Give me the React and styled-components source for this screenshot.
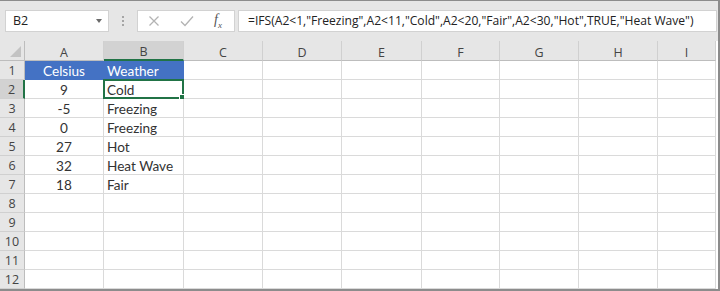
import React from "react";
import styled, { createGlobalStyle } from "styled-components";

const COLS = ["A", "B", "C", "D", "E", "F", "G", "H", "I"];
const WIDTHS = [79, 80, 79, 79, 80, 78, 79, 79, 58];

const rows = [
  { a: "Celsius", b: "Weather", head: true },
  { a: "9", b: "Cold" },
  { a: "-5", b: "Freezing" },
  { a: "0", b: "Freezing" },
  { a: "27", b: "Hot" },
  { a: "32", b: "Heat Wave" },
  { a: "18", b: "Fair" },
  {},
  {},
  {},
  {},
  {},
];

const GlobalStyle = createGlobalStyle`
  body {
    margin: 0;
    background: #fff;
    font-family: "Lato", "Open Sans", sans-serif;
  }
`;

const Frame = styled.div`
  width: 720px;
  height: 291px;
  box-sizing: border-box;
  border-top: 1px solid #8c8c8c;
  border-right: 2px solid #8c8c8c;
  border-bottom: 2px solid #8c8c8c;
  background: #e6e6e6;
  display: flex;
  flex-direction: column;
  overflow: hidden;
`;

const FormulaBar = styled.div`
  height: 40px;
  display: flex;
  align-items: center;
  padding: 0 1px 1px 5px;
  box-sizing: border-box;
`;

const Box = styled.div`
  height: 22px;
  background: #fff;
  border: 1px solid #d2d2d2;
  box-sizing: border-box;
  display: flex;
  align-items: center;
`;

const NameBox = styled(Box)`
  width: 104px;
  padding: 0 6px 0 7px;
  justify-content: space-between;
  font-family: "Open Sans", sans-serif;
  font-size: 12.5px;
  color: #222;
`;

const Caret = styled.span`
  width: 0;
  height: 0;
  border-left: 3.5px solid transparent;
  border-right: 3.5px solid transparent;
  border-top: 4px solid #6b6b6b;
`;

const Dots = styled.div`
  width: 28px;
  display: flex;
  flex-direction: column;
  align-items: center;
  gap: 2px;

  & span {
    width: 2px;
    height: 2px;
    background: #a5a5a5;
  }
`;

const ButtonsBox = styled(Box)`
  width: 98px;
  padding: 0 10px 0 10px;
  justify-content: space-between;
`;

const FormulaBox = styled(Box)`
  flex: 1;
  margin-left: 3px;
  padding-left: 9px;
  font-family: "Open Sans", sans-serif;
  font-size: 12.1px;
  color: #222;
  white-space: nowrap;
`;

const Fx = styled.span`
  font-family: "Liberation Serif", serif;
  font-style: italic;
  font-size: 14px;
  color: #555;
  margin-right: 2px;

  & sub {
    font-size: 9px;
  }
`;

const Grid = styled.div`
  display: grid;
  grid-template-columns: 25px ${WIDTHS.map((w) => `${w}px`).join(" ")};
  grid-template-rows: 20px repeat(12, 19px);
  background: #fff;
`;

const Corner = styled.div`
  background: #e6e6e6;
  border-right: 1px solid #bdbdbd;
  border-bottom: 1px solid #bdbdbd;
  box-sizing: border-box;
  position: relative;

  &::after {
    content: "";
    position: absolute;
    right: 3px;
    bottom: 3px;
    width: 0;
    height: 0;
    border-left: 11px solid transparent;
    border-bottom: 11px solid #c3c3c3;
  }
`;

const ColHead = styled.div`
  background: ${(p) => (p.$active ? "#d2d2d2" : "#e6e6e6")};
  border-bottom: ${(p) => (p.$active ? "2px solid #217346" : "1px solid #bdbdbd")};
  border-right: 1px solid #d0d0d0;
  box-sizing: border-box;
  display: flex;
  align-items: center;
  justify-content: center;
  padding-top: 3px;
  font-family: "Open Sans", sans-serif;
  font-size: 12.5px;
  color: #444;
`;

const RowHead = styled.div`
  background: ${(p) => (p.$active ? "#d2d2d2" : "#e6e6e6")};
  border-right: ${(p) => (p.$active ? "2px solid #217346" : "1px solid #bdbdbd")};
  border-bottom: 1px solid #d0d0d0;
  box-sizing: border-box;
  display: flex;
  align-items: center;
  justify-content: center;
  font-family: "Open Sans", sans-serif;
  font-size: 12.5px;
  color: #444;
`;

const Cell = styled.div`
  border-right: 1px solid ${(p) => (p.$fill ? "#4472c4" : "#dadada")};
  border-bottom: 1px solid ${(p) => (p.$fill ? "#4472c4" : "#dadada")};
  box-sizing: border-box;
  background: ${(p) => (p.$fill ? "#4472c4" : "#fff")};
  color: ${(p) => (p.$fill ? "#fff" : "#333")};
  display: flex;
  align-items: center;
  justify-content: ${(p) => (p.$center ? "center" : "flex-start")};
  padding: 1px 3px 0;
  font-size: 13.6px;
  white-space: nowrap;
  position: relative;
`;

const Selection = styled.div`
  position: absolute;
  left: -1px;
  top: -1px;
  right: -1px;
  bottom: -1px;
  border: 2px solid #217346;
  pointer-events: none;

  &::after {
    content: "";
    position: absolute;
    right: -4px;
    bottom: -4px;
    width: 5px;
    height: 5px;
    background: #217346;
    border: 1px solid #fff;
  }
`;

const CrossIcon = () => (
  <svg width="12" height="12" viewBox="0 0 12 12">
    <path d="M1.5 1.5 L10.5 10.5 M10.5 1.5 L1.5 10.5" stroke="#b3b3b3" strokeWidth="1.3" fill="none" />
  </svg>
);

const CheckIcon = () => (
  <svg width="14" height="12" viewBox="0 0 14 12">
    <path d="M1 6.5 L5 10.5 L13 1.5" stroke="#b3b3b3" strokeWidth="1.3" fill="none" />
  </svg>
);

const App = () => (
  <>
    <GlobalStyle />
    <Frame>
      <FormulaBar>
        <NameBox>
          B2
          <Caret />
        </NameBox>
        <Dots>
          <span />
          <span />
          <span />
        </Dots>
        <ButtonsBox>
          <CrossIcon />
          <CheckIcon />
          <Fx>
            f<sub>x</sub>
          </Fx>
        </ButtonsBox>
        <FormulaBox>
          =IFS(A2&lt;1,"Freezing",A2&lt;11,"Cold",A2&lt;20,"Fair",A2&lt;30,"Hot",TRUE,"Heat Wave")
        </FormulaBox>
      </FormulaBar>
      <Grid>
        <Corner />
        {COLS.map((c) => (
          <ColHead key={c} $active={c === "B"}>
            {c}
          </ColHead>
        ))}
        {rows.map((r, i) => (
          <React.Fragment key={i}>
            <RowHead $active={i === 1}>{i + 1}</RowHead>
            {COLS.map((c) => {
              const val = c === "A" ? r.a : c === "B" ? r.b : null;
              const fill = r.head && (c === "A" || c === "B");
              return (
                <Cell key={c} $fill={fill} $center={c === "A"}>
                  {val}
                  {i === 1 && c === "B" && <Selection />}
                </Cell>
              );
            })}
          </React.Fragment>
        ))}
      </Grid>
    </Frame>
  </>
);

export default App;
